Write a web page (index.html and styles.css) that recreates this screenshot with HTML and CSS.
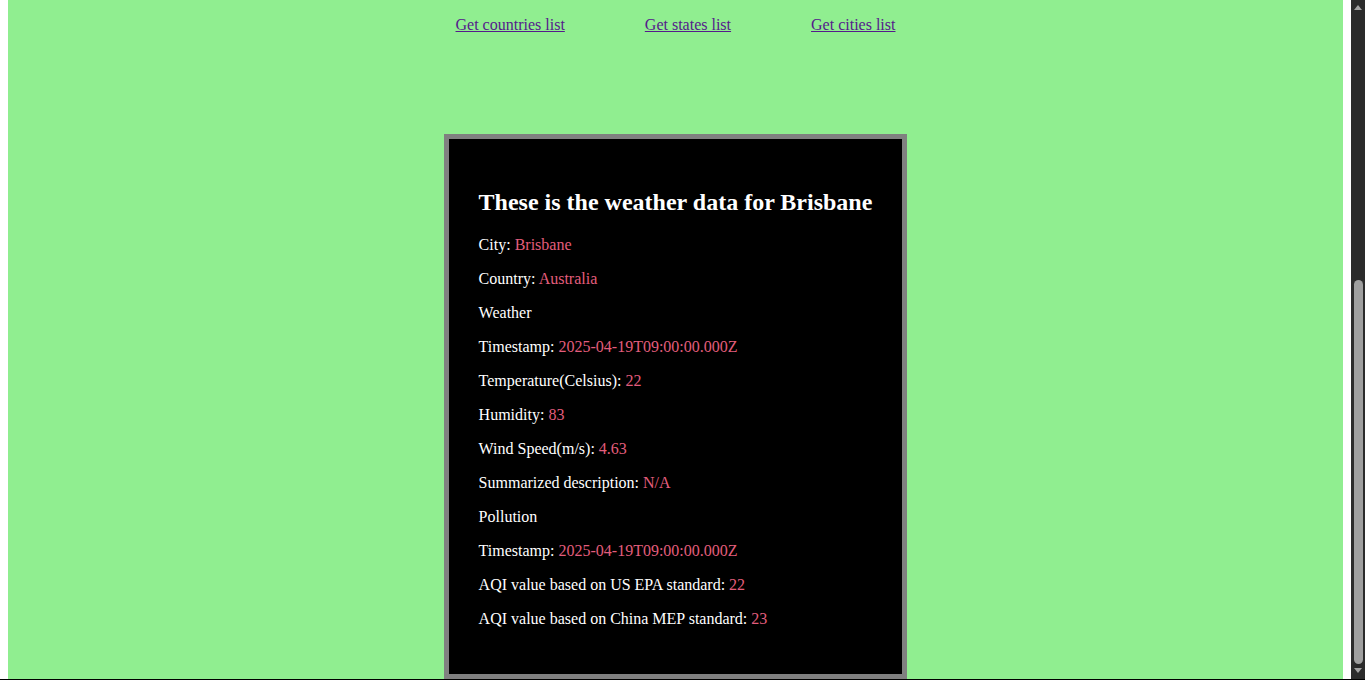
FILE: index.html
```html
<!DOCTYPE html>
<html lang="en">
<head>
<meta charset="utf-8">
<title>Weather</title>
<link rel="stylesheet" href="styles.css">
</head>
<body>
<div class="window">
  <div class="page">
    <main class="content">
      <nav class="nav">
        <a href="#countries" class="nav-link">Get countries list</a>
        <a href="#states" class="nav-link">Get states list</a>
        <a href="#cities" class="nav-link">Get cities list</a>
      </nav>
      <section class="card">
        <h2 class="card-title">These is the weather data for Brisbane</h2>
        <p class="row">City: <span class="val">Brisbane</span></p>
        <p class="row">Country: <span class="val">Australia</span></p>
        <p class="row">Weather</p>
        <p class="row">Timestamp: <span class="val">2025-04-19T09:00:00.000Z</span></p>
        <p class="row">Temperature(Celsius): <span class="val">22</span></p>
        <p class="row">Humidity: <span class="val">83</span></p>
        <p class="row">Wind Speed(m/s): <span class="val">4.63</span></p>
        <p class="row">Summarized description: <span class="val">N/A</span></p>
        <p class="row">Pollution</p>
        <p class="row">Timestamp: <span class="val">2025-04-19T09:00:00.000Z</span></p>
        <p class="row">AQI value based on US EPA standard: <span class="val">22</span></p>
        <p class="row">AQI value based on China MEP standard: <span class="val">23</span></p>
      </section>
    </main>
  </div>
  <div class="scrollbar">
    <div class="arrow arrow-up"></div>
    <div class="track"><div class="thumb"></div></div>
    <div class="arrow arrow-down"></div>
  </div>
</div>
</body>
</html>
```
FILE: styles.css
```css
html, body {
  margin: 0;
  padding: 0;
  height: 680px;
  overflow: hidden;
  background: #000;
}
.window {
  display: flex;
  height: 679px;
  background: #fff;
  font-family: "Liberation Serif", "Times New Roman", serif;
  font-size: 16px;
}
.page {
  flex: 1;
  padding: 0 8px;
  background: #fff;
  min-width: 0;
}
.content {
  height: 100%;
  background: #90ee90;
  display: flex;
  flex-direction: column;
  align-items: center;
  overflow: hidden;
}
.nav {
  display: flex;
  gap: 80px;
  margin-top: 16px;
  line-height: 18px;
}
.nav-link {
  color: #551a8b;
  text-decoration: underline;
}
.card {
  margin-top: 100px;
  background: #000;
  border: 5px solid #808080;
  padding: 30px;
  color: #fff;
  width: fit-content;
  flex-shrink: 0;
}
.card-title {
  font-size: 24px;
  font-weight: bold;
  margin: 20px 0;
}
.row {
  margin: 16px 0;
  line-height: 18px;
}
.val {
  color: #e35d7c;
}
.scrollbar {
  width: 14px;
  background: #2b2b2b;
  display: flex;
  flex-direction: column;
  align-items: center;
}
.arrow {
  width: 0;
  height: 0;
  border-left: 4px solid transparent;
  border-right: 4px solid transparent;
}
.arrow-up {
  margin-top: 5px;
  border-bottom: 5px solid #a3a3a3;
}
.arrow-down {
  margin-bottom: 6px;
  border-top: 5px solid #a3a3a3;
}
.track {
  flex: 1;
  width: 100%;
  display: flex;
  flex-direction: column;
  justify-content: flex-end;
  align-items: center;
  padding-bottom: 4px;
}
.thumb {
  width: 9px;
  height: 384px;
  background: #9f9f9f;
  border-radius: 5px;
}
```
